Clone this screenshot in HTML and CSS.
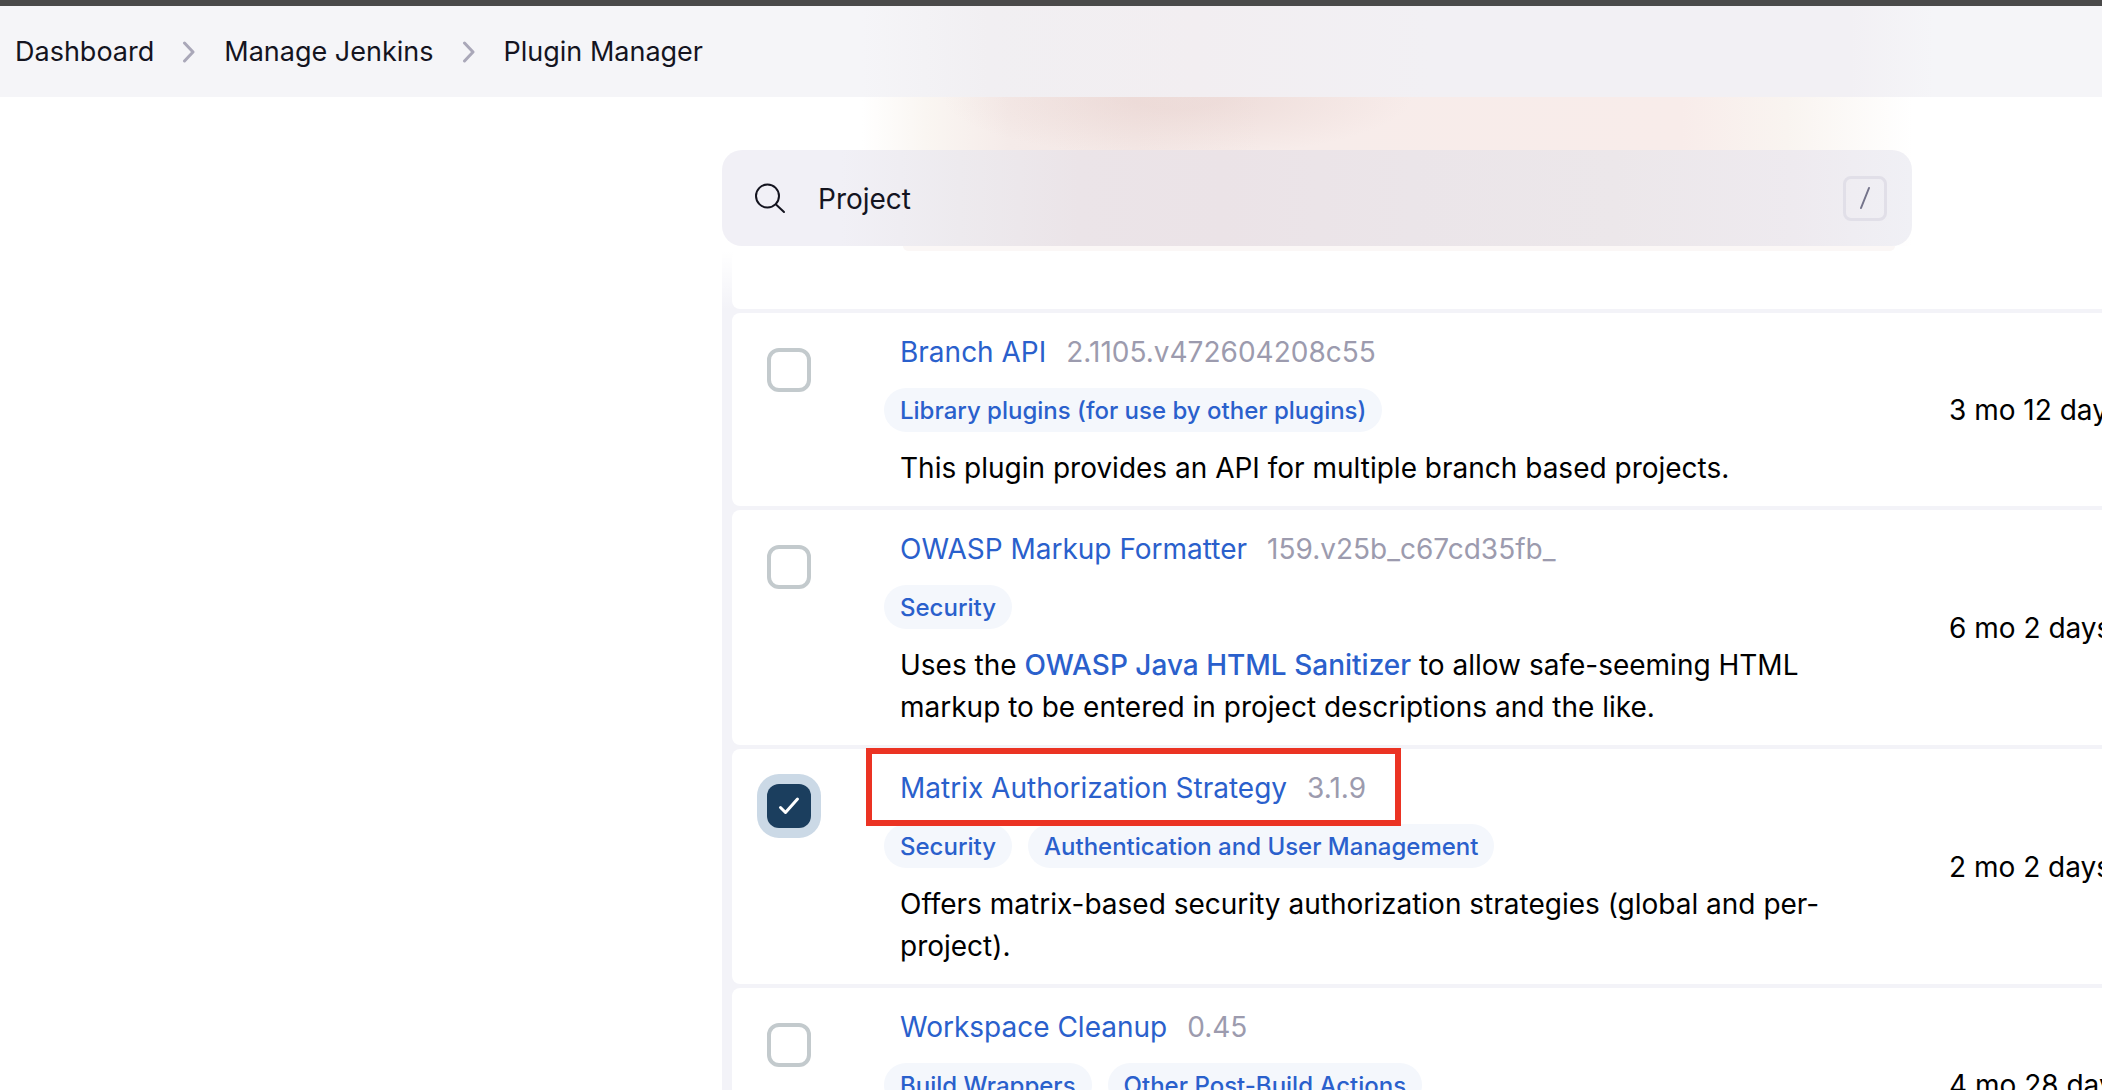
FILE: index.html
```html
<!DOCTYPE html>
<html lang="en">
<head>
<meta charset="utf-8">
<title>Plugin Manager</title>
<link rel="stylesheet" href="styles.css">
</head>
<body>
<header class="topbar">
  <nav class="breadcrumbs" aria-label="Breadcrumb">
    <a href="#">Dashboard</a>
    <svg class="chevron" viewBox="0 0 14 22" aria-hidden="true"><path d="M2.500 2 11 11 2.500 20"/></svg>
    <a href="#">Manage Jenkins</a>
    <svg class="chevron" viewBox="0 0 14 22" aria-hidden="true"><path d="M2.500 2 11 11 2.500 20"/></svg>
    <a href="#">Plugin Manager</a>
  </nav>
</header>
<main class="content">
  <div class="search-bar">
    <label class="search">
      <svg class="search-icon" viewBox="0 0 32 32" aria-hidden="true"><circle cx="13.500" cy="14" r="11.500"/><path d="M22 22.500 30 30"/></svg>
      <input class="search-input" type="text" value="Project" aria-label="Search plugins">
      <kbd class="shortcut"><svg viewBox="0 0 12 24" aria-hidden="true"><path d="M10 2 2 22"/></svg></kbd>
    </label>
  </div>
  <div class="results">
    <table class="plugins">
      <colgroup><col class="col-check"><col><col class="col-date"></colgroup>
      <tbody>
        <tr class="previous"><td></td><td></td><td></td></tr>
        <tr>
          <td class="check"><input type="checkbox" aria-label="Branch API"></td>
          <td class="plugin">
            <div class="title"><a href="#">Branch API</a><span class="version">2.1105.v472604208c55</span></div>
            <div class="tags"><a href="#">Library plugins (for use by other plugins)</a></div>
            <p>This plugin provides an API for multiple branch based projects.</p>
          </td>
          <td class="date">3 mo 12 days ago</td>
        </tr>
        <tr>
          <td class="check"><input type="checkbox" aria-label="OWASP Markup Formatter"></td>
          <td class="plugin">
            <div class="title"><a href="#">OWASP Markup Formatter</a><span class="version">159.v25b_c67cd35fb_</span></div>
            <div class="tags"><a href="#">Security</a></div>
            <p>Uses the <a href="#">OWASP Java HTML Sanitizer</a> to allow safe-seeming HTML markup to be entered in project descriptions and the like.</p>
          </td>
          <td class="date">6 mo 2 days ago</td>
        </tr>
        <tr>
          <td class="check"><input type="checkbox" checked aria-label="Matrix Authorization Strategy"></td>
          <td class="plugin">
            <div class="title highlighted"><a href="#">Matrix Authorization Strategy</a><span class="version">3.1.9</span></div>
            <div class="tags"><a href="#">Security</a><a href="#">Authentication and User Management</a></div>
            <p>Offers matrix-based security authorization strategies (global and per-project).</p>
          </td>
          <td class="date">2 mo 2 days ago</td>
        </tr>
        <tr>
          <td class="check"><input type="checkbox" aria-label="Workspace Cleanup"></td>
          <td class="plugin">
            <div class="title"><a href="#">Workspace Cleanup</a><span class="version">0.45</span></div>
            <div class="tags"><a href="#">Build Wrappers</a><a href="#">Other Post-Build Actions</a></div>
            <p>This plugin deletes the project workspace when invoked.</p>
          </td>
          <td class="date">4 mo 28 days ago</td>
        </tr>
      </tbody>
    </table>
  </div>
</main>
</body>
</html>
```
FILE: styles.css
```css
* { box-sizing: border-box; }

body {
  margin: 0;
  height: 100vh;
  overflow: hidden;
  background: #fff;
  color: #000;
  font: 400 28px/42px Inter, "Liberation Sans", sans-serif;
}

a { color: #2a60cc; text-decoration: none; }
p { margin: 0; }

.topbar {
  border-top: 6px solid #4a4a4a;
  background: linear-gradient(90deg, #f5f5f8 41%, #f1eff2 47%, #f2eef1 57%, #f2f0f4 68%, #f2f0f4 88%, #f5f5f8 92%);
}

.breadcrumbs {
  display: flex;
  align-items: center;
  gap: 28px;
  height: 91px;
  padding-left: 15px;
  font-size: 27px;
}
.breadcrumbs a { color: #14141f; }

.chevron {
  width: 14px;
  height: 22px;
  fill: none;
  stroke: #aaa8b9;
  stroke-width: 3;
  stroke-linecap: round;
  stroke-linejoin: round;
}

.content {
  padding-left: 722px;
  background: linear-gradient(90deg, #fff 41%, #faf6f2 44%, #f5ebe9 48%, #f4e8e6 54%, #f7ecea 60%, #f8ecea 80%, #f9f4f0 85%, #fff 91%) no-repeat 0 0 / 100% 149px;
}

.search-bar {
  position: relative;
  padding-top: 53px;
}
.search-bar::before {
  content: "";
  position: absolute;
  inset: 0 50% 0 16%;
  background: radial-gradient(50% 60px at 50% 0, rgba(226, 200, 196, 0.4) 20%, transparent);
}

.search {
  position: relative;
  z-index: 2;
  display: flex;
  align-items: center;
  width: 100%;
  max-width: 1190px;
  height: 96px;
  padding: 0 25px 0 32px;
  border-radius: 20px;
  background: linear-gradient(90deg, #f1f0f6 10%, #edeaee 20%, #ebe4e8 30%, #ebe3e7 42%, #ebe5e9 58%, #ece7ea 75%, #eeeaef 90%, #f0f0f5);
}

.search-icon {
  width: 32px;
  height: 32px;
  fill: none;
  stroke: #14141f;
  stroke-width: 2;
  stroke-linecap: round;
}

.search-input {
  flex: 1;
  min-width: 0;
  margin: 0 0 0 32px;
  padding: 2px 0 0;
  border: 0;
  outline: 0;
  background: transparent;
  color: #14141f;
  font: inherit;
}

.shortcut {
  display: grid;
  place-items: center;
  width: 44px;
  height: 45px;
  border: 3px solid #e1dfe8;
  border-radius: 8px;
}
.shortcut svg {
  width: 12px;
  height: 24px;
  fill: none;
  stroke: #74738a;
  stroke-width: 2;
  stroke-linecap: round;
}

.results {
  position: relative;
  padding-left: 10px;
  background: #f3f3f8;
}
.results::before {
  content: "";
  position: absolute;
  z-index: 1;
  inset: 0 0 auto;
  height: 64px;
  background: linear-gradient(#fff 8%, rgba(255, 255, 255, 0));
}
.results::after {
  content: "";
  position: absolute;
  z-index: 1;
  top: 0;
  left: 181px;
  width: 992px;
  height: 5px;
  border-radius: 0 0 12px 12px;
  background: #fbf7f6;
}

.plugins {
  width: 100%;
  table-layout: fixed;
  border-collapse: separate;
  border-spacing: 0 4px;
}
.col-check { width: 152px; }
.col-date { width: 169px; }

td { padding: 0; background: #fff; }
td:first-child { border-radius: 8px 0 0 8px; }
.previous td { height: 59px; }

.check { padding: 35px 0 0 35px; vertical-align: top; }
.check input {
  display: block;
  width: 44px;
  height: 44px;
  margin: 0;
  appearance: none;
  border: 4px solid #c3cacd;
  border-radius: 12px;
}
.check input:checked {
  border: 0;
  background: #1b3e5e url('data:image/svg+xml,<svg xmlns="http://www.w3.org/2000/svg" viewBox="0 0 44 44"><path d="M13.500 23.500 18.500 28.500 30.500 15" fill="none" stroke="white" stroke-width="3" stroke-linecap="round" stroke-linejoin="round"/></svg>');
  box-shadow: 0 0 0 10px #cbd9e6;
}

.plugin { padding: 18px 48px 17px 16px; }

.title {
  display: flex;
  gap: 20px;
  width: max-content;
}
.version { color: #9c9bae; }

.highlighted { position: relative; }
.highlighted::after {
  content: "";
  position: absolute;
  inset: -19px -35px -17px -34px;
  border: 6px solid #eb3323;
}

.tags {
  display: flex;
  gap: 16px;
  margin: 15px 0 15px -16px;
}
.tags a {
  padding: 1px 16px 0;
  border-radius: 22px;
  background: #f4f7fc;
  font-size: 24px;
  font-weight: 500;
  line-height: 43px;
}

p a { font-weight: 500; }

.date { padding-left: 16px; white-space: nowrap; }
```
